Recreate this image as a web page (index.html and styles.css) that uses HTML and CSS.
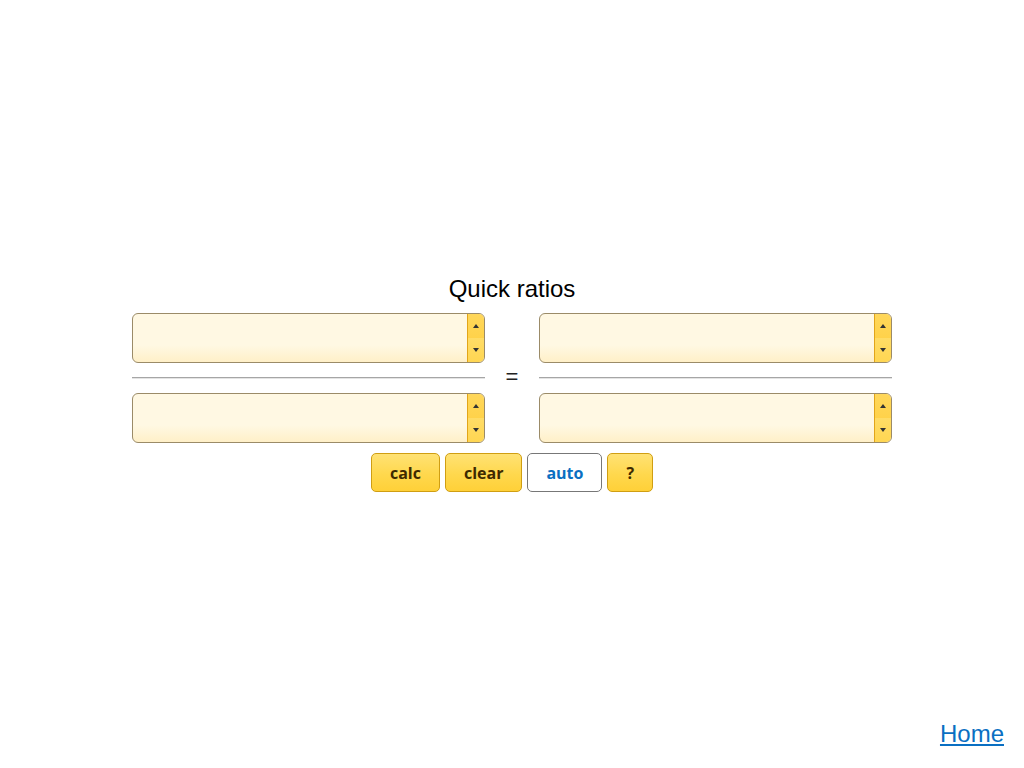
FILE: index.html
```html
<!DOCTYPE html>
<html lang="en">
<head>
<meta charset="utf-8">
<title>Quick ratios</title>
<link rel="stylesheet" href="styles.css">
</head>
<body>
<div class="page">
  <main class="main">
    <h1 class="title">Quick ratios</h1>
    <div class="grid">
      <div class="field"><input class="num" type="text"><div class="spin"><span class="up"></span><span class="down"></span></div></div>
      <div class="gapcell"></div>
      <div class="field"><input class="num" type="text"><div class="spin"><span class="up"></span><span class="down"></span></div></div>
      <div class="rule"></div>
      <div class="eq">=</div>
      <div class="rule"></div>
      <div class="field"><input class="num" type="text"><div class="spin"><span class="up"></span><span class="down"></span></div></div>
      <div class="gapcell"></div>
      <div class="field"><input class="num" type="text"><div class="spin"><span class="up"></span><span class="down"></span></div></div>
    </div>
    <div class="buttons">
      <button class="btn">calc</button>
      <button class="btn">clear</button>
      <button class="btn btn-auto">auto</button>
      <button class="btn">?</button>
    </div>
  </main>
  <footer class="footer"><a href="#" class="home">Home</a></footer>
</div>
</body>
</html>
```

FILE: styles.css
```css
html, body {
  margin: 0;
  padding: 0;
  background: #fff;
}
body {
  font-family: "Liberation Sans", Arial, sans-serif;
}
.page {
  height: 100vh;
  display: flex;
  flex-direction: column;
}
.main {
  flex: 1;
  display: flex;
  flex-direction: column;
  align-items: center;
  padding-top: 275px;
}
.title {
  margin: 0 0 10px;
  font-size: 24px;
  font-weight: normal;
  color: #000;
  line-height: 28px;
}
.grid {
  display: grid;
  grid-template-columns: 353px 54px 353px;
  grid-template-rows: 50px 30px 50px;
}
.field {
  display: flex;
  border: 1px solid #9b8b68;
  border-radius: 6px;
  overflow: hidden;
  background: linear-gradient(#fff8e3 0%, #fff8e3 65%, #fff0c8 100%);
}
.num {
  flex: 1;
  min-width: 0;
  border: 0;
  background: transparent;
  outline: none;
  font: 18px "Liberation Sans", Arial, sans-serif;
  padding: 0 8px;
}
.spin {
  width: 16px;
  border-left: 1px solid #e1a51a;
  display: flex;
  flex-direction: column;
}
.spin span {
  flex: 1;
  display: flex;
  align-items: center;
  justify-content: center;
}
.up {
  background: linear-gradient(#ffd75a, #ffd24a);
}
.down {
  background: linear-gradient(#ffdc66, #ffd652);
}
.up::before {
  content: "";
  border-left: 3.5px solid transparent;
  border-right: 3.5px solid transparent;
  border-bottom: 4px solid #333;
}
.down::before {
  content: "";
  border-left: 3.5px solid transparent;
  border-right: 3.5px solid transparent;
  border-top: 4px solid #333;
}
.rule {
  align-self: center;
  height: 0;
  border-top: 1px solid #a6a6a6;
  border-bottom: 1px solid #e4e4e4;
  margin-top: -1px;
}
.eq {
  display: flex;
  align-items: center;
  justify-content: center;
  font-size: 22px;
  color: #222;
  padding-bottom: 2px;
}
.buttons {
  display: flex;
  gap: 5px;
  margin-top: 10px;
}
.btn {
  height: 39px;
  padding: 0 18px;
  border: 1px solid #d09e12;
  border-radius: 5px;
  background: linear-gradient(#ffe274 0%, #ffd84d 55%, #ffd038 100%);
  font: 700 16px "Open Sans", "DejaVu Sans", sans-serif;
  color: #3e2a00;
  cursor: pointer;
}
.btn-auto {
  background: #fff;
  border-color: #777;
  color: #0a6fc2;
}
.footer {
  display: flex;
  justify-content: flex-end;
  padding: 0 20px 20px 0;
}
.home {
  font-size: 24px;
  color: #0a6fc2;
  text-decoration: underline;
  line-height: 28px;
}
```
